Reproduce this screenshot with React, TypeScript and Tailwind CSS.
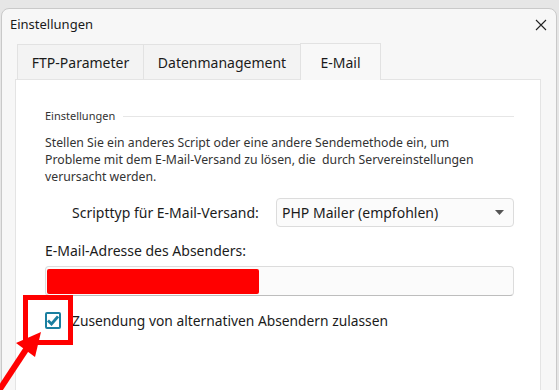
import React from 'react';

const font = { fontFamily: '"Noto Sans", "Open Sans", sans-serif' };

const Tab: React.FC<{ label: string; active?: boolean; width: string }> = ({ label, active, width }) => (
  <div
    className={
      active
        ? `${width} h-[37px] -mb-px flex items-center justify-center border border-b-0 border-[#e2e2e2] bg-[#f8f8f8] text-[14px] text-[#1b1b1b]`
        : `${width} h-[35px] flex items-center justify-center border border-b-0 border-r-0 border-[#e2e2e2] bg-[#f3f3f3] text-[14px] text-[#1b1b1b]`
    }
  >
    {label}
  </div>
);

export default function App() {
  return (
    <div className="relative w-[559px] h-[390px] overflow-hidden bg-[#e6e6e6]" style={font}>
      <div className="ml-[1px] mt-[8px] w-[556px] h-[390px] rounded-t-[8px] border border-[#c9c9c9] bg-[#f7f7f7]">
        <div className="h-[28px] flex items-center justify-between pl-[8px] pr-[7px] pt-[3px]">
          <span className="text-[13px] text-[#1a1a1a]">Einstellungen</span>
          <svg width="12" height="12" viewBox="0 0 12 12" className="mr-[2px]">
            <path d="M1 1 L11 11 M11 1 L1 11" stroke="#222" strokeWidth="1.1" />
          </svg>
        </div>
        <div className="pl-[15px] pt-[6px] flex items-end">
          <Tab label="FTP-Parameter" width="w-[126px]" />
          <Tab label="Datenmanagement" width="w-[157px]" />
          <Tab label="E-Mail" active width="w-[81px]" />
        </div>
        <div className="ml-[13px] w-[526px] h-[320px] bg-white border border-[#e4e4e4] pl-[29px] pr-[26px] pt-[28px]">
          <div className="flex items-center gap-[8px]">
            <span className="text-[11px] text-[#333]">Einstellungen</span>
            <div className="flex-1 h-px bg-[#e6e6e6]" />
          </div>
          <p className="mt-[9px] w-[450px] text-[12.25px] leading-[17px] text-[#333]">
            Stellen Sie ein anderes Script oder eine andere Sendemethode ein, um Probleme mit dem E-Mail-Versand zu lösen, die&nbsp; durch Servereinstellungen verursacht werden.
          </p>
          <div className="mt-[13px] flex items-center">
            <span className="pl-[27px] w-[231px] text-[14px] text-[#1b1b1b]">Scripttyp für E-Mail-Versand:</span>
            <div className="flex-1 h-[29px] flex items-center justify-between rounded-[4px] border border-[#dcdcdc] bg-[#fbfbfb] pl-[5px] pr-[9px]">
              <span className="text-[14px] text-[#1b1b1b]">PHP Mailer (empfohlen)</span>
              <svg width="9" height="5" viewBox="0 0 9 5">
                <path d="M0 0 H9 L4.5 5 Z" fill="#555" />
              </svg>
            </div>
          </div>
          <div className="mt-[13px] text-[14px] text-[#1b1b1b]">E-Mail-Adresse des Absenders:</div>
          <div className="mt-[5px] h-[30px] rounded-[4px] border border-[#dcdcdc] border-b-[#bdbdbd] bg-[#fbfbfb] pl-px pt-[2px]">
            <div className="w-[212px] h-[25px] rounded-[2px] bg-[#ff0000]" />
          </div>
          <label className="mt-[15px] flex items-center gap-[11px]">
            <span className="w-[16px] h-[17px] flex items-center justify-center rounded-[2px] border-2 border-[#1a7fa0] bg-white">
              <svg width="12" height="11" viewBox="0 0 12 11">
                <path d="M1 5.5 L4.5 9 L11 1.5" fill="none" stroke="#1a7fa0" strokeWidth="2.8" />
              </svg>
            </span>
            <span className="text-[13.8px] text-[#1b1b1b]">Zusendung von alternativen Absendern zulassen</span>
          </label>
        </div>
      </div>
      <div className="absolute left-[23px] top-[295px] w-[50px] h-[50px] border-[5px] border-[#ff0000]" />
      <svg className="absolute left-0 top-[325px]" width="60" height="65" viewBox="0 325 60 65">
        <path d="M-2 392 L27 348" stroke="#ff0000" strokeWidth="6" />
        <path d="M41 332 L16 343 L35 357 Z" fill="#ff0000" />
      </svg>
    </div>
  );
}
